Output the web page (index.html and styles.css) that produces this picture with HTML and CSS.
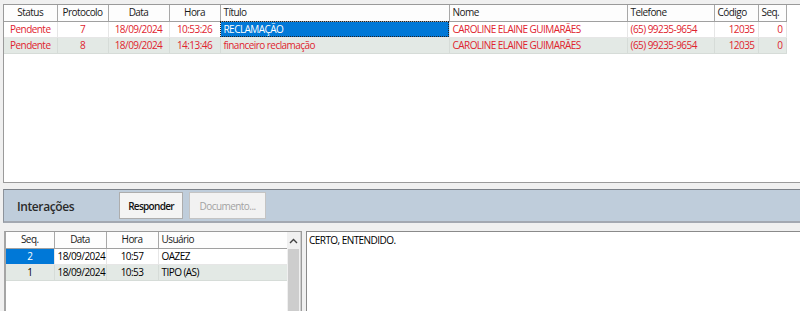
FILE: index.html
```html
<!DOCTYPE html>
<html lang="pt-BR">
<head>
<meta charset="utf-8">
<title>Protocolos</title>
<link rel="stylesheet" href="styles.css">
</head>
<body>
<div class="page">
  <div class="top-grid">
    <table class="grid main">
      <colgroup>
        <col style="width:53px"><col style="width:51px"><col style="width:61px"><col style="width:51px"><col style="width:229px"><col style="width:178px"><col style="width:87px"><col style="width:44px"><col style="width:28px">
      </colgroup>
      <thead>
        <tr>
          <th class="c">Status</th><th class="c">Protocolo</th><th class="c">Data</th><th class="c">Hora</th><th>Título</th><th>Nome</th><th>Telefone</th><th>Código</th><th>Seq.</th>
        </tr>
      </thead>
      <tbody class="red">
        <tr>
          <td class="c">Pendente</td><td class="c">7</td><td class="c">18/09/2024</td><td class="c">10:53:26</td><td class="sel focus">RECLAMAÇÃO</td><td>CAROLINE ELAINE GUIMARÃES</td><td>(65) 99235-9654</td><td class="r">12035</td><td class="r">0</td>
        </tr>
        <tr class="alt">
          <td class="c">Pendente</td><td class="c">8</td><td class="c">18/09/2024</td><td class="c">14:13:46</td><td>financeiro reclamação</td><td>CAROLINE ELAINE GUIMARÃES</td><td>(65) 99235-9654</td><td class="r">12035</td><td class="r">0</td>
        </tr>
      </tbody>
    </table>
  </div>

  <div class="panel">
    <span class="panel-title">Interações</span>
    <button class="btn btn-resp">Responder</button>
    <button class="btn btn-doc" disabled>Documento...</button>
  </div>

  <div class="bottom">
    <div class="sub-grid">
      <div class="sub-list">
        <table class="grid sub">
          <colgroup>
            <col style="width:48px"><col style="width:52px"><col style="width:52px"><col style="width:130px">
          </colgroup>
          <thead>
            <tr><th class="c">Seq.</th><th class="c">Data</th><th class="c">Hora</th><th>Usuário</th></tr>
          </thead>
          <tbody>
            <tr><td class="c sel">2</td><td>18/09/2024</td><td class="c">10:57</td><td>OAZEZ</td></tr>
            <tr class="alt"><td class="c">1</td><td>18/09/2024</td><td class="c">10:53</td><td>TIPO (AS)</td></tr>
          </tbody>
        </table>
      </div>
      <div class="scrollbar">
        <div class="arrow">
          <svg width="9" height="6" viewBox="0 0 9 6"><path d="M1 5 L4.5 1.5 L8 5" fill="none" stroke="#404040" stroke-width="1.4"/></svg>
        </div>
        <div class="thumb"></div>
      </div>
    </div>
    <div class="memo">CERTO, ENTENDIDO.</div>
  </div>
</div>
</body>
</html>
```

FILE: styles.css
```css
* { box-sizing: border-box; }
html, body {
  margin: 0;
  padding: 0;
  background: #f0f0f0;
  width: 800px;
  height: 311px;
  overflow: hidden;
  font-family: "Open Sans", "Noto Sans", "DejaVu Sans", sans-serif;
  font-size: 10px;
  letter-spacing: -0.55px;
}
.page {
  display: flex;
  flex-direction: column;
  height: 311px;
}
.top-grid {
  margin: 4px 0 0 3px;
  height: 179px;
  width: 800px;
  background: #fff;
  border: 1px solid #9a9a9a;
  border-right: none;
  overflow: hidden;
}
.grid {
  border-collapse: collapse;
  table-layout: fixed;
}
.grid.main { width: 782px; }
.grid.sub { width: 282px; }
.grid th, .grid td {
  height: 16px;
  padding: 0 3px;
  white-space: nowrap;
  overflow: hidden;
  line-height: 15px;
  font-weight: normal;
  text-align: left;
}
.grid th {
  background: #fdfdfd;
  color: #1a1a1a;
  border-right: 1px solid #a8a8a8;
  border-bottom: 1px solid #a0a0a0;
}
.grid td {
  border-right: 1px solid #e6e6e6;
  border-bottom: 1px solid #e6e6e6;
  color: #000;
}
.grid .c { text-align: center; }
.grid .r { text-align: right; }
.red td { color: #e0232e; }
.grid tr.alt td {
  background: #e3e9e5;
  border-color: #d6dcd8;
}
.grid td.sel {
  background: #0078d7;
  color: #fff;
}
.grid td.focus {
  outline: 1px dotted #222;
  outline-offset: -1px;
}

.panel {
  margin: 6px 0 0 3px;
  height: 34px;
  background: #bfcddb;
  border-top: 1px solid #7c8188;
  border-left: 1px solid #8d939b;
  border-bottom: 2px solid #a3a8b1;
  display: flex;
  align-items: center;
  padding-left: 13px;
}
.panel-title {
  font-size: 12px;
  font-weight: 600;
  letter-spacing: -0.4px;
  color: #2a2a2a;
  width: 102px;
  padding-top: 1px;
}
.btn {
  font-family: inherit;
  font-size: 10px;
  letter-spacing: -0.55px;
  height: 27px;
  padding: 0;
  margin-right: 6px;
  border-radius: 0;
  background: #f4f4f4;
  border: 1px solid #adadad;
  color: #111;
}
.btn-resp { width: 64px; font-weight: 600; letter-spacing: -0.7px; }
.btn-doc {
  width: 77px;
  color: #a2a2a2;
  border-color: #c4c4c4;
  background: #f2f2f2;
}

.bottom {
  display: flex;
  margin-top: 8px;
  flex: 1;
  min-height: 0;
}
.sub-grid {
  margin-left: 4px;
  width: 298px;
  background: #fff;
  border: 1px solid #9a9a9a;
  border-left: 2px solid #a5a5a5;
  border-bottom: none;
  display: flex;
}
.sub-list {
  width: 281px;
  overflow: hidden;
}
.scrollbar {
  width: 14px;
  background: #f0f0f0;
  display: flex;
  flex-direction: column;
  border-right: 1px solid #cfcfcf;
}
.arrow {
  height: 17px;
  display: flex;
  align-items: center;
  justify-content: center;
}
.thumb {
  flex: 1;
  margin: 0 1px;
  background: #cdcdcd;
}
.memo {
  margin-left: 4px;
  flex: 1;
  background: #fff;
  border: 1px solid #8a8a8a;
  border-right: none;
  border-bottom: none;
  padding: 1px 2px;
  color: #000;
  line-height: 15px;
}
```
